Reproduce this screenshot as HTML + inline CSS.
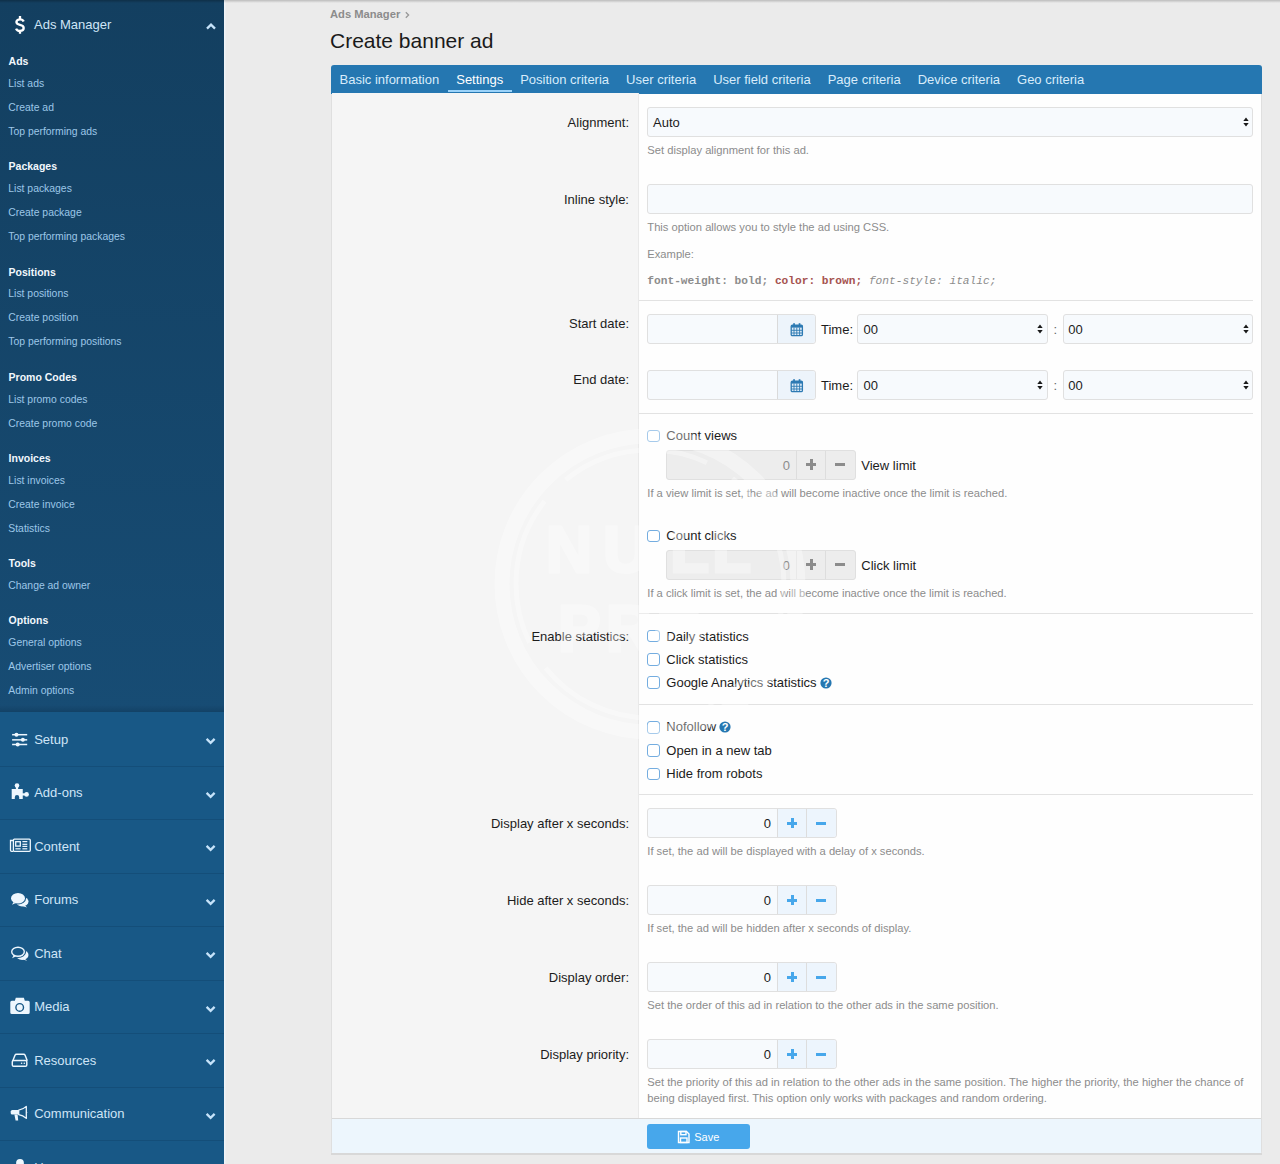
<!DOCTYPE html>
<html><head><meta charset="utf-8"><title>Create banner ad</title>
<style>
html,body{margin:0;padding:0;}
body{width:1280px;height:1164px;overflow:hidden;position:relative;background:#ebebeb;font-family:"Liberation Sans",sans-serif;}
.t{position:absolute;white-space:nowrap;line-height:1;}
svg{overflow:visible}
</style></head><body>
<div style="position:absolute;left:0px;top:0px;width:224px;height:712px;background:linear-gradient(#133f60,#174c74)"></div>
<div style="position:absolute;left:0px;top:705px;width:224px;height:7px;background:linear-gradient(rgba(0,20,40,0),rgba(0,20,40,0.18))"></div>
<div style="position:absolute;left:0px;top:712.0px;width:224px;height:53.5px;background:#185886"></div>
<div style="position:absolute;left:0px;top:765.5px;width:224px;height:53.5px;background:#185886;border-top:1px solid #144e79;box-sizing:border-box"></div>
<div style="position:absolute;left:0px;top:819.0px;width:224px;height:53.5px;background:#185886;border-top:1px solid #144e79;box-sizing:border-box"></div>
<div style="position:absolute;left:0px;top:872.5px;width:224px;height:53.5px;background:#185886;border-top:1px solid #144e79;box-sizing:border-box"></div>
<div style="position:absolute;left:0px;top:926.0px;width:224px;height:53.5px;background:#185886;border-top:1px solid #144e79;box-sizing:border-box"></div>
<div style="position:absolute;left:0px;top:979.5px;width:224px;height:53.5px;background:#185886;border-top:1px solid #144e79;box-sizing:border-box"></div>
<div style="position:absolute;left:0px;top:1033.0px;width:224px;height:53.5px;background:#185886;border-top:1px solid #144e79;box-sizing:border-box"></div>
<div style="position:absolute;left:0px;top:1086.5px;width:224px;height:53.5px;background:#185886;border-top:1px solid #144e79;box-sizing:border-box"></div>
<div style="position:absolute;left:0px;top:1140.0px;width:224px;height:53.5px;background:#185886;border-top:1px solid #144e79;box-sizing:border-box"></div>
<div style="position:absolute;left:224px;top:0px;width:2px;height:1164px;background:linear-gradient(90deg,#f3f6fa,#e9ecef)"></div>
<svg style="position:absolute;left:14px;top:15px" width="12" height="20" viewBox="0 0 12 20"><path d="M6 1v3.2 M6 15.6v3.2 M9.7 6.5C9.1 5 7.7 4.3 6 4.3 3.8 4.3 2.4 5.4 2.4 7c0 1.8 1.5 2.4 3.6 2.9 2.1.5 3.7 1.1 3.7 3.1 0 1.7-1.6 2.9-3.8 2.9-1.9 0-3.3-.8-3.8-2.3" fill="none" stroke="#fff" stroke-width="2.3" stroke-linecap="butt"/></svg>
<div class="t" style="left:34.00px;top:18.00px;font-size:13px;color:#cfe5f7;font-weight:400;font-family:'Liberation Sans';font-style:normal;">Ads Manager</div>
<svg style="position:absolute;left:205px;top:22px" width="12" height="9" viewBox="0 0 12 9"><polyline points="2,6.6 6,2.6 10,6.6" fill="none" stroke="#c6e3fa" stroke-width="2.3"/></svg>
<div class="t" style="left:8.60px;top:56.11px;font-size:10.5px;color:#f2f8fd;font-weight:700;font-family:'Liberation Sans';font-style:normal;">Ads</div>
<div class="t" style="left:8.30px;top:79.00px;font-size:10.4px;color:#9dc7e8;font-weight:400;font-family:'Liberation Sans';font-style:normal;">List ads</div>
<div class="t" style="left:8.30px;top:103.00px;font-size:10.4px;color:#9dc7e8;font-weight:400;font-family:'Liberation Sans';font-style:normal;">Create ad</div>
<div class="t" style="left:8.30px;top:127.00px;font-size:10.4px;color:#9dc7e8;font-weight:400;font-family:'Liberation Sans';font-style:normal;">Top performing ads</div>
<div class="t" style="left:8.60px;top:161.41px;font-size:10.5px;color:#f2f8fd;font-weight:700;font-family:'Liberation Sans';font-style:normal;">Packages</div>
<div class="t" style="left:8.30px;top:183.50px;font-size:10.4px;color:#9dc7e8;font-weight:400;font-family:'Liberation Sans';font-style:normal;">List packages</div>
<div class="t" style="left:8.30px;top:207.50px;font-size:10.4px;color:#9dc7e8;font-weight:400;font-family:'Liberation Sans';font-style:normal;">Create package</div>
<div class="t" style="left:8.30px;top:231.50px;font-size:10.4px;color:#9dc7e8;font-weight:400;font-family:'Liberation Sans';font-style:normal;">Top performing packages</div>
<div class="t" style="left:8.60px;top:266.71px;font-size:10.5px;color:#f2f8fd;font-weight:700;font-family:'Liberation Sans';font-style:normal;">Positions</div>
<div class="t" style="left:8.30px;top:288.80px;font-size:10.4px;color:#9dc7e8;font-weight:400;font-family:'Liberation Sans';font-style:normal;">List positions</div>
<div class="t" style="left:8.30px;top:312.80px;font-size:10.4px;color:#9dc7e8;font-weight:400;font-family:'Liberation Sans';font-style:normal;">Create position</div>
<div class="t" style="left:8.30px;top:336.80px;font-size:10.4px;color:#9dc7e8;font-weight:400;font-family:'Liberation Sans';font-style:normal;">Top performing positions</div>
<div class="t" style="left:8.60px;top:372.01px;font-size:10.5px;color:#f2f8fd;font-weight:700;font-family:'Liberation Sans';font-style:normal;">Promo Codes</div>
<div class="t" style="left:8.30px;top:394.60px;font-size:10.4px;color:#9dc7e8;font-weight:400;font-family:'Liberation Sans';font-style:normal;">List promo codes</div>
<div class="t" style="left:8.30px;top:418.60px;font-size:10.4px;color:#9dc7e8;font-weight:400;font-family:'Liberation Sans';font-style:normal;">Create promo code</div>
<div class="t" style="left:8.60px;top:453.31px;font-size:10.5px;color:#f2f8fd;font-weight:700;font-family:'Liberation Sans';font-style:normal;">Invoices</div>
<div class="t" style="left:8.30px;top:476.40px;font-size:10.4px;color:#9dc7e8;font-weight:400;font-family:'Liberation Sans';font-style:normal;">List invoices</div>
<div class="t" style="left:8.30px;top:500.40px;font-size:10.4px;color:#9dc7e8;font-weight:400;font-family:'Liberation Sans';font-style:normal;">Create invoice</div>
<div class="t" style="left:8.30px;top:524.40px;font-size:10.4px;color:#9dc7e8;font-weight:400;font-family:'Liberation Sans';font-style:normal;">Statistics</div>
<div class="t" style="left:8.60px;top:558.01px;font-size:10.5px;color:#f2f8fd;font-weight:700;font-family:'Liberation Sans';font-style:normal;">Tools</div>
<div class="t" style="left:8.30px;top:580.70px;font-size:10.4px;color:#9dc7e8;font-weight:400;font-family:'Liberation Sans';font-style:normal;">Change ad owner</div>
<div class="t" style="left:8.60px;top:615.31px;font-size:10.5px;color:#f2f8fd;font-weight:700;font-family:'Liberation Sans';font-style:normal;">Options</div>
<div class="t" style="left:8.30px;top:638.00px;font-size:10.4px;color:#9dc7e8;font-weight:400;font-family:'Liberation Sans';font-style:normal;">General options</div>
<div class="t" style="left:8.30px;top:662.00px;font-size:10.4px;color:#9dc7e8;font-weight:400;font-family:'Liberation Sans';font-style:normal;">Advertiser options</div>
<div class="t" style="left:8.30px;top:686.00px;font-size:10.4px;color:#9dc7e8;font-weight:400;font-family:'Liberation Sans';font-style:normal;">Admin options</div>
<div class="t" style="left:34.20px;top:732.60px;font-size:13px;color:#cfe5f7;font-weight:400;font-family:'Liberation Sans';font-style:normal;">Setup</div>
<svg style="position:absolute;left:204px;top:737.0px" width="13" height="9" viewBox="0 0 13 9"><polyline points="2.6,1.9 6.6,5.9 10.6,1.9" fill="none" stroke="#c6e3fa" stroke-width="2.3"/></svg>
<div class="t" style="left:34.20px;top:786.10px;font-size:13px;color:#cfe5f7;font-weight:400;font-family:'Liberation Sans';font-style:normal;">Add-ons</div>
<svg style="position:absolute;left:204px;top:790.5px" width="13" height="9" viewBox="0 0 13 9"><polyline points="2.6,1.9 6.6,5.9 10.6,1.9" fill="none" stroke="#c6e3fa" stroke-width="2.3"/></svg>
<div class="t" style="left:34.20px;top:839.60px;font-size:13px;color:#cfe5f7;font-weight:400;font-family:'Liberation Sans';font-style:normal;">Content</div>
<svg style="position:absolute;left:204px;top:844.0px" width="13" height="9" viewBox="0 0 13 9"><polyline points="2.6,1.9 6.6,5.9 10.6,1.9" fill="none" stroke="#c6e3fa" stroke-width="2.3"/></svg>
<div class="t" style="left:34.20px;top:893.10px;font-size:13px;color:#cfe5f7;font-weight:400;font-family:'Liberation Sans';font-style:normal;">Forums</div>
<svg style="position:absolute;left:204px;top:897.5px" width="13" height="9" viewBox="0 0 13 9"><polyline points="2.6,1.9 6.6,5.9 10.6,1.9" fill="none" stroke="#c6e3fa" stroke-width="2.3"/></svg>
<div class="t" style="left:34.20px;top:946.60px;font-size:13px;color:#cfe5f7;font-weight:400;font-family:'Liberation Sans';font-style:normal;">Chat</div>
<svg style="position:absolute;left:204px;top:951.0px" width="13" height="9" viewBox="0 0 13 9"><polyline points="2.6,1.9 6.6,5.9 10.6,1.9" fill="none" stroke="#c6e3fa" stroke-width="2.3"/></svg>
<div class="t" style="left:34.20px;top:1000.10px;font-size:13px;color:#cfe5f7;font-weight:400;font-family:'Liberation Sans';font-style:normal;">Media</div>
<svg style="position:absolute;left:204px;top:1004.5px" width="13" height="9" viewBox="0 0 13 9"><polyline points="2.6,1.9 6.6,5.9 10.6,1.9" fill="none" stroke="#c6e3fa" stroke-width="2.3"/></svg>
<div class="t" style="left:34.20px;top:1053.60px;font-size:13px;color:#cfe5f7;font-weight:400;font-family:'Liberation Sans';font-style:normal;">Resources</div>
<svg style="position:absolute;left:204px;top:1058.0px" width="13" height="9" viewBox="0 0 13 9"><polyline points="2.6,1.9 6.6,5.9 10.6,1.9" fill="none" stroke="#c6e3fa" stroke-width="2.3"/></svg>
<div class="t" style="left:34.20px;top:1107.10px;font-size:13px;color:#cfe5f7;font-weight:400;font-family:'Liberation Sans';font-style:normal;">Communication</div>
<svg style="position:absolute;left:204px;top:1111.5px" width="13" height="9" viewBox="0 0 13 9"><polyline points="2.6,1.9 6.6,5.9 10.6,1.9" fill="none" stroke="#c6e3fa" stroke-width="2.3"/></svg>
<div class="t" style="left:34.20px;top:1160.60px;font-size:13px;color:#cfe5f7;font-weight:400;font-family:'Liberation Sans';font-style:normal;">Users</div>
<svg style="position:absolute;left:204px;top:1165.0px" width="13" height="9" viewBox="0 0 13 9"><polyline points="2.6,1.9 6.6,5.9 10.6,1.9" fill="none" stroke="#c6e3fa" stroke-width="2.3"/></svg>
<svg style="position:absolute;left:8px;top:728px" width="28" height="28" viewBox="0 0 28 28"><g stroke="#eef7fe" stroke-width="1.5"><line x1="4.1" y1="6.7" x2="19.2" y2="6.7"/><line x1="4.1" y1="11.86" x2="19.2" y2="11.86"/><line x1="4.1" y1="16.5" x2="19.2" y2="16.5"/></g><g fill="#eef7fe"><circle cx="8.45" cy="6.7" r="2"/><circle cx="14.85" cy="11.86" r="2"/><circle cx="9.7" cy="16.5" r="2"/></g></svg>
<svg style="position:absolute;left:8px;top:778px" width="28" height="28" viewBox="0 0 28 28"><g fill="#eef7fe"><path d="M3.7 11H14.75V21H11.2V19.2a2.2 2.2 0 0 0-4.4 0V21H3.7Z"/><circle cx="9" cy="7.5" r="2.3"/><rect x="7.9" y="8" width="2.2" height="3.5"/><circle cx="18.6" cy="16.4" r="2.3"/><rect x="14" y="15.3" width="4" height="2.2"/></g></svg>
<svg style="position:absolute;left:6px;top:832px" width="28" height="28" viewBox="0 0 28 28"><g fill="none" stroke="#eef7fe" stroke-width="1.3"><rect x="7.4" y="7.15" width="16.9" height="12.2" rx="1"/><path d="M7.4 8.5H4.5v9.8a1.05 1.05 0 0 0 1.05 1.05H7.4"/><rect x="9.7" y="9.7" width="4.6" height="4.4"/></g><g fill="#eef7fe"><rect x="16.4" y="9" width="4.9" height="1.2"/><rect x="16.4" y="11.7" width="4.9" height="1.2"/><rect x="16.4" y="13.8" width="4.9" height="1.2"/><rect x="9.4" y="16.2" width="5.2" height="1.2"/><rect x="16.4" y="16.2" width="4.9" height="1.2"/></g></svg>
<svg style="position:absolute;left:6px;top:886px" width="28" height="28" viewBox="0 0 28 28"><g fill="#eef7fe"><ellipse cx="16.2" cy="15.6" rx="6.3" ry="4.9"/><path d="M18.5 19l2.6 2.4-4.2-1.2z"/></g><g fill="#185886" stroke="#185886" stroke-width="2.2"><ellipse cx="12" cy="12.3" rx="7" ry="5.2"/><path d="M7.6 16l-1.6 2.8 3.8-1.7z"/></g><g fill="#eef7fe"><ellipse cx="12" cy="12.3" rx="7" ry="5.2"/><path d="M7.6 16l-1.6 2.8 3.8-1.7z"/></g></svg>
<svg style="position:absolute;left:6px;top:939px" width="28" height="28" viewBox="0 0 28 28"><g transform="translate(0,.4)"><g fill="#eef7fe"><ellipse cx="16.2" cy="15.6" rx="6.3" ry="4.9"/><path d="M18.5 19l2.6 2.4-4.2-1.2z"/></g><g fill="#185886" stroke="#185886" stroke-width="2.2"><ellipse cx="12" cy="12.3" rx="7" ry="5.2"/><path d="M7.6 16l-1.6 2.8 3.8-1.7z"/></g><g fill="#eef7fe"><ellipse cx="12" cy="12.3" rx="7" ry="5.2"/><path d="M7.6 16l-1.6 2.8 3.8-1.7z"/></g><ellipse cx="12" cy="12.3" rx="5.6" ry="3.8" fill="#185886"/></g></svg>
<svg style="position:absolute;left:6px;top:992px" width="28" height="28" viewBox="0 0 28 28"><path fill="#eef7fe" d="M4.3 10.2a1.5 1.5 0 0 1 1.5-1.5h3.1l.9-2.9h8.1l.9 2.9h3.4a1.5 1.5 0 0 1 1.5 1.5v10.4a1.5 1.5 0 0 1-1.5 1.5H5.8a1.5 1.5 0 0 1-1.5-1.5z"/><circle cx="13.7" cy="15.4" r="3.8" fill="none" stroke="#185886" stroke-width="1.4"/></svg>
<svg style="position:absolute;left:6px;top:1046px" width="28" height="28" viewBox="0 0 28 28"><g fill="none" stroke="#eef7fe" stroke-width="1.45"><path d="M6.8 14.7L9 9.3a1.6 1.6 0 0 1 1.5-1h7.1a1.6 1.6 0 0 1 1.5 1l2.2 5.4"/><rect x="6.3" y="14.4" width="14.5" height="5.9" rx="1.3"/></g><g fill="#eef7fe"><circle cx="15.6" cy="17.3" r=".8"/><circle cx="18.3" cy="17.3" r=".8"/></g></svg>
<svg style="position:absolute;left:6px;top:1099px" width="28" height="28" viewBox="0 0 28 28"><g fill="#eef7fe"><path d="M6.3 11h6.4v4.6H6.3a1.6 1.6 0 0 1-1.6-1.6v-1.4A1.6 1.6 0 0 1 6.3 11z"/><path d="M8.4 15.4h3.2l.6 6.2H9.6z"/><path d="M20.4 13l1.3.6-1.3.6z"/></g><path d="M12.7 11.2c2.9-.4 5.5-1.8 7.6-3.8v12c-2.1-2-4.7-3.4-7.6-3.8z" fill="none" stroke="#eef7fe" stroke-width="1.3" stroke-linejoin="round"/></svg>
<svg style="position:absolute;left:6px;top:1150px" width="28" height="28" viewBox="0 0 28 28"><circle cx="14" cy="13" r="3.9" fill="#eef7fe"/></svg>
<div style="position:absolute;left:224px;top:0px;width:1056px;height:3px;background:linear-gradient(rgba(0,0,0,0.2),rgba(0,0,0,0))"></div>
<div style="position:absolute;left:0px;top:0px;width:224px;height:3px;background:linear-gradient(rgba(0,0,0,0.25),rgba(0,0,0,0))"></div>
<div class="t" style="left:330.00px;top:8.62px;font-size:11.2px;color:#8c8c8c;font-weight:700;font-family:'Liberation Sans';font-style:normal;">Ads Manager</div>
<svg style="position:absolute;left:404px;top:10px" width="8" height="10" viewBox="0 0 8 10"><polyline points="1.8,2.2 4.6,5 1.8,7.8" fill="none" stroke="#999" stroke-width="1.3"/></svg>
<div class="t" style="left:330.00px;top:30.42px;font-size:21px;color:#1a1a1a;font-weight:400;font-family:'Liberation Sans';font-style:normal;">Create banner ad</div>
<div style="position:absolute;left:331px;top:65px;width:931px;height:1089px;background:#fefefe;border:1px solid #dfdfdf;border-top:none;box-sizing:border-box;border-radius:3px"></div>
<div style="position:absolute;left:331px;top:65px;width:931px;height:28.6px;background:#2577b1;border-radius:3px 3px 0 0"></div>
<div class="t" style="left:339.50px;top:73.00px;font-size:13px;color:#d8ecfb;font-weight:400;font-family:'Liberation Sans';font-style:normal;">Basic information</div>
<div class="t" style="left:456.22px;top:73.00px;font-size:13px;color:#ffffff;font-weight:400;font-family:'Liberation Sans';font-style:normal;">Settings</div>
<div style="position:absolute;left:447.72px;top:90px;width:63.98px;height:2.4px;background:#9bd3fa"></div>
<div class="t" style="left:520.20px;top:73.00px;font-size:13px;color:#d8ecfb;font-weight:400;font-family:'Liberation Sans';font-style:normal;">Position criteria</div>
<div class="t" style="left:626.08px;top:73.00px;font-size:13px;color:#d8ecfb;font-weight:400;font-family:'Liberation Sans';font-style:normal;">User criteria</div>
<div class="t" style="left:713.16px;top:73.00px;font-size:13px;color:#d8ecfb;font-weight:400;font-family:'Liberation Sans';font-style:normal;">User field criteria</div>
<div class="t" style="left:827.69px;top:73.00px;font-size:13px;color:#d8ecfb;font-weight:400;font-family:'Liberation Sans';font-style:normal;">Page criteria</div>
<div class="t" style="left:917.67px;top:73.00px;font-size:13px;color:#d8ecfb;font-weight:400;font-family:'Liberation Sans';font-style:normal;">Device criteria</div>
<div class="t" style="left:1017.03px;top:73.00px;font-size:13px;color:#d8ecfb;font-weight:400;font-family:'Liberation Sans';font-style:normal;">Geo criteria</div>
<div style="position:absolute;left:332px;top:93px;width:307px;height:1025px;background:#f5f5f5;border-right:1px solid #e9e9e9;box-sizing:border-box"></div>
<div class="t" style="right:651.00px;top:116.00px;font-size:13px;color:#1c1c1c;font-weight:400;font-family:'Liberation Sans';font-style:normal;">Alignment:</div>
<div style="position:absolute;left:647px;top:107px;width:606px;height:30px;background:#f7fafd;border:1px solid #e0e0e0;border-radius:3px;box-sizing:border-box;"></div>
<div class="t" style="left:653.00px;top:115.90px;font-size:13px;color:#1c1c1c;font-weight:400;font-family:'Liberation Sans';font-style:normal;">Auto</div>
<svg style="position:absolute;left:1242.8px;top:117px" width="7" height="11" viewBox="0 0 7 11"><path d="M0.3 4L3 0.6 5.7 4z M0.3 6L3 9.4 5.7 6z" fill="#1a1a1a"/></svg>
<div class="t" style="left:647.30px;top:145.27px;font-size:11.2px;color:#8c8c8c;font-weight:400;font-family:'Liberation Sans';font-style:normal;">Set display alignment for this ad.</div>
<div class="t" style="right:651.00px;top:192.90px;font-size:13px;color:#1c1c1c;font-weight:400;font-family:'Liberation Sans';font-style:normal;">Inline style:</div>
<div style="position:absolute;left:647px;top:184px;width:606px;height:30px;background:#f7fafd;border:1px solid #e0e0e0;border-radius:3px;box-sizing:border-box;"></div>
<div class="t" style="left:647.30px;top:222.42px;font-size:11.2px;color:#8c8c8c;font-weight:400;font-family:'Liberation Sans';font-style:normal;">This option allows you to style the ad using CSS.</div>
<div class="t" style="left:647.30px;top:249.12px;font-size:11.2px;color:#8c8c8c;font-weight:400;font-family:'Liberation Sans';font-style:normal;">Example:</div>
<div class="t" style="left:647.30px;top:275.72px;font-size:11.2px;color:#8c8c8c;font-weight:400;font-family:'Liberation Mono';font-style:normal;"><span style="font-weight:700;color:#8c8c8c">font-weight: bold;</span> <span style="font-weight:700;color:#a5524f">color: brown;</span> <span style="font-style:italic;color:#8c8c8c">font-style: italic;</span></div>
<div style="position:absolute;left:639px;top:300px;width:614px;height:1px;background:#e2e2e2"></div>
<div class="t" style="right:651.00px;top:317.00px;font-size:13px;color:#1c1c1c;font-weight:400;font-family:'Liberation Sans';font-style:normal;">Start date:</div>
<div style="position:absolute;left:647px;top:314px;width:169px;height:30px;background:#f7fafd;border:1px solid #e0e0e0;border-radius:3px;box-sizing:border-box;"></div>
<div style="position:absolute;left:777px;top:315px;width:1px;height:28px;background:#dadada"></div>
<div style="position:absolute;left:778px;top:315px;width:37px;height:28px;background:#edf4fb;border-radius:0 3px 3px 0"></div>
<svg style="position:absolute;left:790px;top:322px" width="14" height="15" viewBox="0 0 14 15"><rect x="1.2" y="3.2" width="11.2" height="10.4" rx="1.2" fill="#e1edf8" stroke="#2d7ab3" stroke-width="1.3"/><rect x="1.2" y="3" width="11.2" height="2.6" fill="#2d7ab3"/><g stroke="#2d7ab3" stroke-width="0.9"><line x1="4" y1="5.5" x2="4" y2="13.5"/><line x1="6.8" y1="5.5" x2="6.8" y2="13.5"/><line x1="9.6" y1="5.5" x2="9.6" y2="13.5"/><line x1="1.2" y1="8.3" x2="12.4" y2="8.3"/><line x1="1.2" y1="11" x2="12.4" y2="11"/></g><g fill="#2d7ab3"><rect x="3.2" y="1.2" width="1.7" height="3"/><rect x="8.7" y="1.2" width="1.7" height="3"/></g></svg>
<div class="t" style="left:821.00px;top:323.20px;font-size:13px;color:#1c1c1c;font-weight:400;font-family:'Liberation Sans';font-style:normal;">Time:</div>
<div style="position:absolute;left:857px;top:314px;width:190.5px;height:30px;background:#f7fafd;border:1px solid #e0e0e0;border-radius:3px;box-sizing:border-box;"></div>
<div class="t" style="left:863.50px;top:323.20px;font-size:13px;color:#1c1c1c;font-weight:400;font-family:'Liberation Sans';font-style:normal;">00</div>
<svg style="position:absolute;left:1037.3px;top:324px" width="7" height="11" viewBox="0 0 7 11"><path d="M0.3 4L3 0.6 5.7 4z M0.3 6L3 9.4 5.7 6z" fill="#1a1a1a"/></svg>
<div class="t" style="left:1053.50px;top:322.50px;font-size:13px;color:#666;font-weight:400;font-family:'Liberation Sans';font-style:normal;">:</div>
<div style="position:absolute;left:1062.5px;top:314px;width:190.5px;height:30px;background:#f7fafd;border:1px solid #e0e0e0;border-radius:3px;box-sizing:border-box;"></div>
<div class="t" style="left:1068.30px;top:323.20px;font-size:13px;color:#1c1c1c;font-weight:400;font-family:'Liberation Sans';font-style:normal;">00</div>
<svg style="position:absolute;left:1242.8px;top:324px" width="7" height="11" viewBox="0 0 7 11"><path d="M0.3 4L3 0.6 5.7 4z M0.3 6L3 9.4 5.7 6z" fill="#1a1a1a"/></svg>
<div class="t" style="right:651.00px;top:373.20px;font-size:13px;color:#1c1c1c;font-weight:400;font-family:'Liberation Sans';font-style:normal;">End date:</div>
<div style="position:absolute;left:647px;top:370px;width:169px;height:30px;background:#f7fafd;border:1px solid #e0e0e0;border-radius:3px;box-sizing:border-box;"></div>
<div style="position:absolute;left:777px;top:371px;width:1px;height:28px;background:#dadada"></div>
<div style="position:absolute;left:778px;top:371px;width:37px;height:28px;background:#edf4fb;border-radius:0 3px 3px 0"></div>
<svg style="position:absolute;left:790px;top:378px" width="14" height="15" viewBox="0 0 14 15"><rect x="1.2" y="3.2" width="11.2" height="10.4" rx="1.2" fill="#e1edf8" stroke="#2d7ab3" stroke-width="1.3"/><rect x="1.2" y="3" width="11.2" height="2.6" fill="#2d7ab3"/><g stroke="#2d7ab3" stroke-width="0.9"><line x1="4" y1="5.5" x2="4" y2="13.5"/><line x1="6.8" y1="5.5" x2="6.8" y2="13.5"/><line x1="9.6" y1="5.5" x2="9.6" y2="13.5"/><line x1="1.2" y1="8.3" x2="12.4" y2="8.3"/><line x1="1.2" y1="11" x2="12.4" y2="11"/></g><g fill="#2d7ab3"><rect x="3.2" y="1.2" width="1.7" height="3"/><rect x="8.7" y="1.2" width="1.7" height="3"/></g></svg>
<div class="t" style="left:821.00px;top:379.40px;font-size:13px;color:#1c1c1c;font-weight:400;font-family:'Liberation Sans';font-style:normal;">Time:</div>
<div style="position:absolute;left:857px;top:370px;width:190.5px;height:30px;background:#f7fafd;border:1px solid #e0e0e0;border-radius:3px;box-sizing:border-box;"></div>
<div class="t" style="left:863.50px;top:379.40px;font-size:13px;color:#1c1c1c;font-weight:400;font-family:'Liberation Sans';font-style:normal;">00</div>
<svg style="position:absolute;left:1037.3px;top:380px" width="7" height="11" viewBox="0 0 7 11"><path d="M0.3 4L3 0.6 5.7 4z M0.3 6L3 9.4 5.7 6z" fill="#1a1a1a"/></svg>
<div class="t" style="left:1053.50px;top:378.70px;font-size:13px;color:#666;font-weight:400;font-family:'Liberation Sans';font-style:normal;">:</div>
<div style="position:absolute;left:1062.5px;top:370px;width:190.5px;height:30px;background:#f7fafd;border:1px solid #e0e0e0;border-radius:3px;box-sizing:border-box;"></div>
<div class="t" style="left:1068.30px;top:379.40px;font-size:13px;color:#1c1c1c;font-weight:400;font-family:'Liberation Sans';font-style:normal;">00</div>
<svg style="position:absolute;left:1242.8px;top:380px" width="7" height="11" viewBox="0 0 7 11"><path d="M0.3 4L3 0.6 5.7 4z M0.3 6L3 9.4 5.7 6z" fill="#1a1a1a"/></svg>
<div style="position:absolute;left:639px;top:413px;width:614px;height:1px;background:#e2e2e2"></div>
<div style="position:absolute;left:647.3px;top:429.7px;width:12.4px;height:12.6px;border:1.6px solid #74ade0;border-radius:3px;box-sizing:border-box;background:#fff"></div>
<div class="t" style="left:666.30px;top:429.20px;font-size:13px;color:#1c1c1c;font-weight:400;font-family:'Liberation Sans';font-style:normal;">Count views</div>
<div style="position:absolute;left:666px;top:450px;width:189.5px;height:30px;background:#ededed;border:1px solid #e0e0e0;border-radius:3px;box-sizing:border-box"></div>
<div style="position:absolute;left:796.0px;top:451px;width:1px;height:28px;background:#dddddd"></div>
<div style="position:absolute;left:825.0px;top:451px;width:1px;height:28px;background:#dddddd"></div>
<div style="position:absolute;left:805.75px;top:463.0px;width:10.5px;height:3px;background:#8c8c8c"></div>
<div style="position:absolute;left:809.5px;top:459.25px;width:3px;height:10.5px;background:#8c8c8c"></div>
<div style="position:absolute;left:835.05px;top:463.0px;width:10.4px;height:3px;background:#8c8c8c"></div>
<div class="t" style="right:490.00px;top:459.00px;font-size:13px;color:#8c8c8c;font-weight:400;font-family:'Liberation Sans';font-style:normal;">0</div>
<div class="t" style="left:861.30px;top:459.20px;font-size:13px;color:#1c1c1c;font-weight:400;font-family:'Liberation Sans';font-style:normal;">View limit</div>
<div class="t" style="left:647.30px;top:487.92px;font-size:11.2px;color:#8c8c8c;font-weight:400;font-family:'Liberation Sans';font-style:normal;">If a view limit is set, the ad will become inactive once the limit is reached.</div>
<div style="position:absolute;left:647.3px;top:529.7px;width:12.4px;height:12.6px;border:1.6px solid #74ade0;border-radius:3px;box-sizing:border-box;background:#fff"></div>
<div class="t" style="left:666.30px;top:529.20px;font-size:13px;color:#1c1c1c;font-weight:400;font-family:'Liberation Sans';font-style:normal;">Count clicks</div>
<div style="position:absolute;left:666px;top:550px;width:189.5px;height:30px;background:#ededed;border:1px solid #e0e0e0;border-radius:3px;box-sizing:border-box"></div>
<div style="position:absolute;left:796.0px;top:551px;width:1px;height:28px;background:#dddddd"></div>
<div style="position:absolute;left:825.0px;top:551px;width:1px;height:28px;background:#dddddd"></div>
<div style="position:absolute;left:805.75px;top:563.0px;width:10.5px;height:3px;background:#8c8c8c"></div>
<div style="position:absolute;left:809.5px;top:559.25px;width:3px;height:10.5px;background:#8c8c8c"></div>
<div style="position:absolute;left:835.05px;top:563.0px;width:10.4px;height:3px;background:#8c8c8c"></div>
<div class="t" style="right:490.00px;top:559.00px;font-size:13px;color:#8c8c8c;font-weight:400;font-family:'Liberation Sans';font-style:normal;">0</div>
<div class="t" style="left:861.30px;top:559.20px;font-size:13px;color:#1c1c1c;font-weight:400;font-family:'Liberation Sans';font-style:normal;">Click limit</div>
<div class="t" style="left:647.30px;top:587.92px;font-size:11.2px;color:#8c8c8c;font-weight:400;font-family:'Liberation Sans';font-style:normal;">If a click limit is set, the ad will become inactive once the limit is reached.</div>
<div style="position:absolute;left:639px;top:613px;width:614px;height:1px;background:#e2e2e2"></div>
<div class="t" style="right:651.00px;top:629.50px;font-size:13px;color:#1c1c1c;font-weight:400;font-family:'Liberation Sans';font-style:normal;">Enable statistics:</div>
<div style="position:absolute;left:647.3px;top:629.8px;width:12.4px;height:12.6px;border:1.6px solid #74ade0;border-radius:3px;box-sizing:border-box;background:#fff"></div>
<div class="t" style="left:666.30px;top:629.50px;font-size:13px;color:#1c1c1c;font-weight:400;font-family:'Liberation Sans';font-style:normal;">Daily statistics</div>
<div style="position:absolute;left:647.3px;top:653.2px;width:12.4px;height:12.6px;border:1.6px solid #74ade0;border-radius:3px;box-sizing:border-box;background:#fff"></div>
<div class="t" style="left:666.30px;top:652.90px;font-size:13px;color:#1c1c1c;font-weight:400;font-family:'Liberation Sans';font-style:normal;">Click statistics</div>
<div style="position:absolute;left:647.3px;top:676.4px;width:12.4px;height:12.6px;border:1.6px solid #74ade0;border-radius:3px;box-sizing:border-box;background:#fff"></div>
<div class="t" style="left:666.30px;top:676.10px;font-size:13px;color:#1c1c1c;font-weight:400;font-family:'Liberation Sans';font-style:normal;">Google Analytics statistics</div>
<svg style="position:absolute;left:820.3px;top:677px" width="12" height="12" viewBox="0 0 12 12"><circle cx="6" cy="6" r="5.6" fill="#2577b1"/><text x="6.1" y="10.1" text-anchor="middle" font-family="Liberation Sans" font-weight="700" font-size="11" fill="#fff">?</text></svg>
<div style="position:absolute;left:639px;top:703.5px;width:614px;height:1px;background:#e2e2e2"></div>
<div style="position:absolute;left:647.3px;top:721.0px;width:12.4px;height:12.6px;border:1.6px solid #74ade0;border-radius:3px;box-sizing:border-box;background:#fff"></div>
<div class="t" style="left:666.30px;top:720.20px;font-size:13px;color:#1c1c1c;font-weight:400;font-family:'Liberation Sans';font-style:normal;">Nofollow</div>
<div style="position:absolute;left:647.3px;top:744.4px;width:12.4px;height:12.6px;border:1.6px solid #74ade0;border-radius:3px;box-sizing:border-box;background:#fff"></div>
<div class="t" style="left:666.30px;top:743.60px;font-size:13px;color:#1c1c1c;font-weight:400;font-family:'Liberation Sans';font-style:normal;">Open in a new tab</div>
<div style="position:absolute;left:647.3px;top:767.6px;width:12.4px;height:12.6px;border:1.6px solid #74ade0;border-radius:3px;box-sizing:border-box;background:#fff"></div>
<div class="t" style="left:666.30px;top:766.80px;font-size:13px;color:#1c1c1c;font-weight:400;font-family:'Liberation Sans';font-style:normal;">Hide from robots</div>
<svg style="position:absolute;left:718.5px;top:721px" width="12" height="12" viewBox="0 0 12 12"><circle cx="6" cy="6" r="5.6" fill="#2577b1"/><text x="6.1" y="10.1" text-anchor="middle" font-family="Liberation Sans" font-weight="700" font-size="11" fill="#fff">?</text></svg>
<div style="position:absolute;left:639px;top:794px;width:614px;height:1px;background:#e2e2e2"></div>
<div class="t" style="right:651.00px;top:817.10px;font-size:13px;color:#1c1c1c;font-weight:400;font-family:'Liberation Sans';font-style:normal;">Display after x seconds:</div>
<div style="position:absolute;left:647px;top:808px;width:189.5px;height:30px;background:#f7fafd;border:1px solid #e0e0e0;border-radius:3px;box-sizing:border-box"></div>
<div style="position:absolute;left:777.0px;top:809px;width:58.5px;height:28px;background:#edf5fd;border-radius:0 3px 3px 0"></div>
<div style="position:absolute;left:777.0px;top:809px;width:1px;height:28px;background:#dddddd"></div>
<div style="position:absolute;left:806.0px;top:809px;width:1px;height:28px;background:#dddddd"></div>
<div style="position:absolute;left:786.75px;top:821.5px;width:10.5px;height:3px;background:#47a7eb"></div>
<div style="position:absolute;left:790.5px;top:817.75px;width:3px;height:10.5px;background:#47a7eb"></div>
<div style="position:absolute;left:816.05px;top:821.5px;width:10.4px;height:3px;background:#47a7eb"></div>
<div class="t" style="right:509.00px;top:817.00px;font-size:13px;color:#1c1c1c;font-weight:400;font-family:'Liberation Sans';font-style:normal;">0</div>
<div class="t" style="left:647.30px;top:846.22px;font-size:11.2px;color:#8c8c8c;font-weight:400;font-family:'Liberation Sans';font-style:normal;">If set, the ad will be displayed with a delay of x seconds.</div>
<div class="t" style="right:651.00px;top:894.10px;font-size:13px;color:#1c1c1c;font-weight:400;font-family:'Liberation Sans';font-style:normal;">Hide after x seconds:</div>
<div style="position:absolute;left:647px;top:885px;width:189.5px;height:30px;background:#f7fafd;border:1px solid #e0e0e0;border-radius:3px;box-sizing:border-box"></div>
<div style="position:absolute;left:777.0px;top:886px;width:58.5px;height:28px;background:#edf5fd;border-radius:0 3px 3px 0"></div>
<div style="position:absolute;left:777.0px;top:886px;width:1px;height:28px;background:#dddddd"></div>
<div style="position:absolute;left:806.0px;top:886px;width:1px;height:28px;background:#dddddd"></div>
<div style="position:absolute;left:786.75px;top:898.5px;width:10.5px;height:3px;background:#47a7eb"></div>
<div style="position:absolute;left:790.5px;top:894.75px;width:3px;height:10.5px;background:#47a7eb"></div>
<div style="position:absolute;left:816.05px;top:898.5px;width:10.4px;height:3px;background:#47a7eb"></div>
<div class="t" style="right:509.00px;top:894.00px;font-size:13px;color:#1c1c1c;font-weight:400;font-family:'Liberation Sans';font-style:normal;">0</div>
<div class="t" style="left:647.30px;top:923.22px;font-size:11.2px;color:#8c8c8c;font-weight:400;font-family:'Liberation Sans';font-style:normal;">If set, the ad will be hidden after x seconds of display.</div>
<div class="t" style="right:651.00px;top:971.10px;font-size:13px;color:#1c1c1c;font-weight:400;font-family:'Liberation Sans';font-style:normal;">Display order:</div>
<div style="position:absolute;left:647px;top:962px;width:189.5px;height:30px;background:#f7fafd;border:1px solid #e0e0e0;border-radius:3px;box-sizing:border-box"></div>
<div style="position:absolute;left:777.0px;top:963px;width:58.5px;height:28px;background:#edf5fd;border-radius:0 3px 3px 0"></div>
<div style="position:absolute;left:777.0px;top:963px;width:1px;height:28px;background:#dddddd"></div>
<div style="position:absolute;left:806.0px;top:963px;width:1px;height:28px;background:#dddddd"></div>
<div style="position:absolute;left:786.75px;top:975.5px;width:10.5px;height:3px;background:#47a7eb"></div>
<div style="position:absolute;left:790.5px;top:971.75px;width:3px;height:10.5px;background:#47a7eb"></div>
<div style="position:absolute;left:816.05px;top:975.5px;width:10.4px;height:3px;background:#47a7eb"></div>
<div class="t" style="right:509.00px;top:971.00px;font-size:13px;color:#1c1c1c;font-weight:400;font-family:'Liberation Sans';font-style:normal;">0</div>
<div class="t" style="left:647.30px;top:1000.22px;font-size:11.2px;color:#8c8c8c;font-weight:400;font-family:'Liberation Sans';font-style:normal;">Set the order of this ad in relation to the other ads in the same position.</div>
<div class="t" style="right:651.00px;top:1048.10px;font-size:13px;color:#1c1c1c;font-weight:400;font-family:'Liberation Sans';font-style:normal;">Display priority:</div>
<div style="position:absolute;left:647px;top:1039px;width:189.5px;height:30px;background:#f7fafd;border:1px solid #e0e0e0;border-radius:3px;box-sizing:border-box"></div>
<div style="position:absolute;left:777.0px;top:1040px;width:58.5px;height:28px;background:#edf5fd;border-radius:0 3px 3px 0"></div>
<div style="position:absolute;left:777.0px;top:1040px;width:1px;height:28px;background:#dddddd"></div>
<div style="position:absolute;left:806.0px;top:1040px;width:1px;height:28px;background:#dddddd"></div>
<div style="position:absolute;left:786.75px;top:1052.5px;width:10.5px;height:3px;background:#47a7eb"></div>
<div style="position:absolute;left:790.5px;top:1048.75px;width:3px;height:10.5px;background:#47a7eb"></div>
<div style="position:absolute;left:816.05px;top:1052.5px;width:10.4px;height:3px;background:#47a7eb"></div>
<div class="t" style="right:509.00px;top:1048.00px;font-size:13px;color:#1c1c1c;font-weight:400;font-family:'Liberation Sans';font-style:normal;">0</div>
<div class="t" style="left:647.30px;top:1077.22px;font-size:11.2px;color:#8c8c8c;font-weight:400;font-family:'Liberation Sans';font-style:normal;">Set the priority of this ad in relation to the other ads in the same position. The higher the priority, the higher the chance of</div>
<div class="t" style="left:647.30px;top:1092.52px;font-size:11.2px;color:#8c8c8c;font-weight:400;font-family:'Liberation Sans';font-style:normal;">being displayed first. This option only works with packages and random ordering.</div>
<svg style="position:absolute;left:0;top:0;pointer-events:none" width="1280" height="1164"><g opacity="0.36" fill="#fff"><circle cx="650" cy="584" r="148" fill="none" stroke="#fff" stroke-width="15"/><circle cx="650" cy="584" r="134" fill="none" stroke="#fff" stroke-width="5" stroke-dasharray="150 30"/><text x="546" y="572" font-family="Liberation Sans" font-weight="700" font-size="64" stroke="#fff" stroke-width="3">N</text><text x="603" y="572" font-family="Liberation Sans" font-weight="700" font-size="64" stroke="#fff" stroke-width="3">U</text><text x="670" y="572" font-family="Liberation Sans" font-weight="700" font-size="64" stroke="#fff" stroke-width="3">L</text><text x="712" y="572" font-family="Liberation Sans" font-weight="700" font-size="64" stroke="#fff" stroke-width="3">L</text><text x="558" y="651" font-family="Liberation Sans" font-weight="700" font-size="64" stroke="#fff" stroke-width="3">P</text><text x="606" y="651" font-family="Liberation Sans" font-weight="700" font-size="64" stroke="#fff" stroke-width="3">R</text><text x="654" y="651" font-family="Liberation Sans" font-weight="700" font-size="64" stroke="#fff" stroke-width="3">O</text></g></svg>
<div style="position:absolute;left:332px;top:1118px;width:929px;height:36px;background:#edf6fd;border-top:1px solid #d8d8d8;box-sizing:border-box"></div>
<div style="position:absolute;left:331px;top:1153px;width:931px;height:1.5px;background:#d8d8d8"></div>
<div style="position:absolute;left:647px;top:1123.75px;width:103px;height:25.5px;background:#47a7eb;border-radius:3px"></div>
<svg style="position:absolute;left:676.5px;top:1129.5px" width="13" height="14" viewBox="0 0 13 14"><g fill="none" stroke="#fff" stroke-width="1.4"><path d="M1.5 1.5h8l2.5 2.5v8.5h-10.5z"/><rect x="3.8" y="1.5" width="5.2" height="3.2"/><rect x="3.5" y="8" width="6.5" height="4.5"/></g></svg>
<div class="t" style="left:694.20px;top:1132.09px;font-size:11px;color:#ffffff;font-weight:400;font-family:'Liberation Sans';font-style:normal;">Save</div>
</body></html>
